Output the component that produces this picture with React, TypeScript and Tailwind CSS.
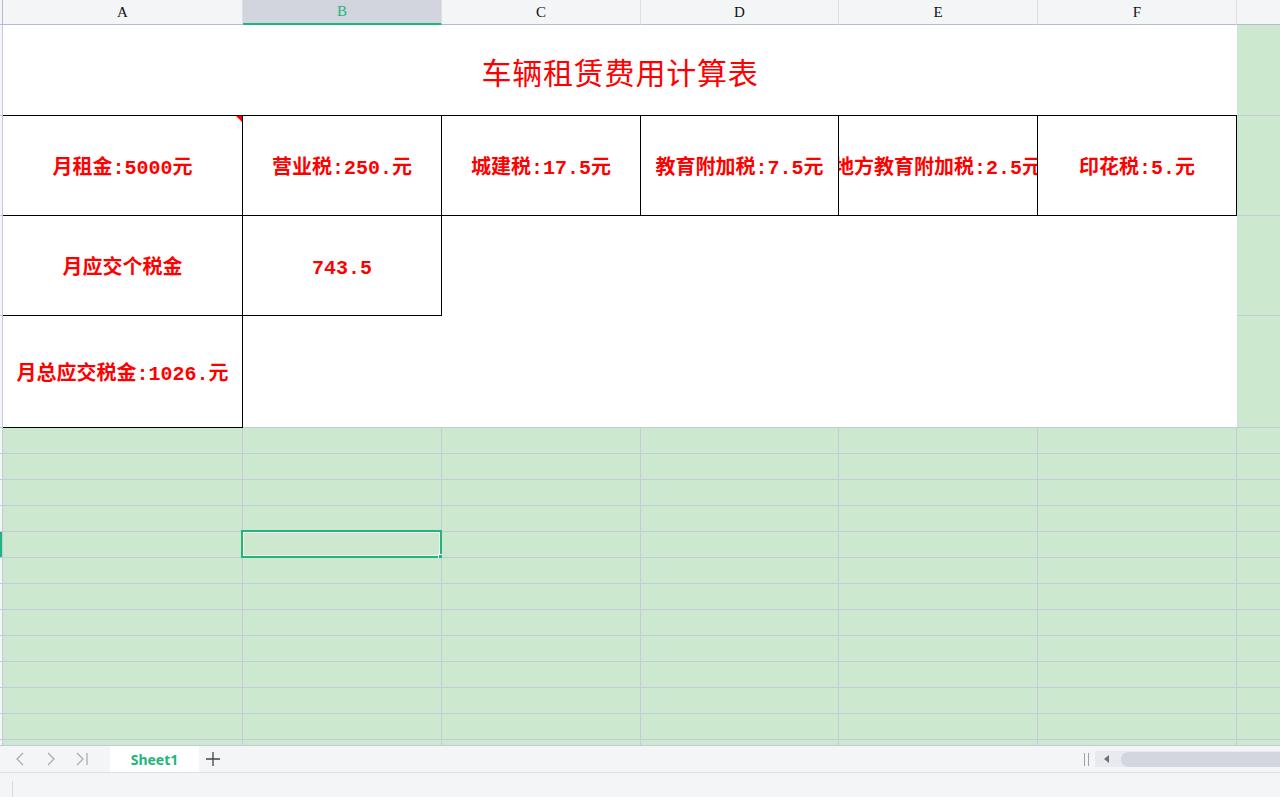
import React from "react";

const cellFont = { fontFamily: '"Liberation Mono", "Noto Sans CJK SC", monospace' };

const headers = [
    { label: "A", w: "w-[240px]" },
    { label: "B", w: "w-[199px]", active: true },
    { label: "C", w: "w-[199px]" },
    { label: "D", w: "w-[198px]" },
    { label: "E", w: "w-[199px]" },
    { label: "F", w: "w-[199px]" },
];

const row2 = ["月租金:5000元", "营业税:250.元", "城建税:17.5元", "教育附加税:7.5元", "地方教育附加税:2.5元", "印花税:5.元"];

function Strip({ active }: { active?: boolean }) {
    return (
        <div className={`border-r border-b border-[#c5cad8] ${active ? "bg-[#1fb57b]" : "bg-[#f4f5f7]"}`}></div>
    );
}

function G() {
    return <div className="bg-[#cce8cf] border-b border-[#c5cad8]"></div>;
}

function Box({ text, corner }: { text: string; corner?: boolean }) {
    return (
        <div
            className="relative bg-white border-r border-b border-black flex items-center justify-center overflow-hidden whitespace-nowrap pt-[6px] text-[20px] font-bold text-[#ff0000]"
            style={cellFont}
        >
            {text}
            {corner && (
                <svg className="absolute top-0 right-0" width="6" height="6" viewBox="0 0 6 6">
                    <polygon points="0,0 6,0 6,6" fill="#ff0000" />
                </svg>
            )}
        </div>
    );
}

export default function App() {
    // rows 5..16 plus the cut-off row 17
    const greenRows = Array.from({ length: 13 }, (_, i) => i + 5);

    return (
        <div className="w-[1280px] h-[797px] flex flex-col overflow-hidden bg-white">
            {/* column header */}
            <div className="flex h-[25px] bg-[#f4f5f7]" style={{ fontFamily: '"Liberation Serif", serif' }}>
                <div className="w-[3px] border-r border-b border-[#b4bbcc]"></div>
                {headers.map((h) => (
                    <div
                        key={h.label}
                        className={`${h.w} flex items-center justify-center text-[15px] border-r border-[#dcdfe6] ${
                            h.active
                                ? "bg-[#d2d5dd] text-[#1fb57b] border-b-2 border-b-[#1fb57b]"
                                : "text-[#111] border-b border-b-[#b4bbcc]"
                        }`}
                    >
                        {h.label}
                    </div>
                ))}
                <div className="flex-1 border-b border-[#b4bbcc]"></div>
            </div>

            {/* sheet */}
            <div className="grid grid-cols-[3px_240px_199px_199px_198px_199px_199px_1fr] grid-rows-[91px_100px_100px_112px_repeat(12,26px)_6px] h-[721px]">
                {/* row 1 */}
                <Strip />
                <div
                    className="col-span-6 bg-white border-b border-black flex items-center justify-center pt-[2px] text-[30px] text-[#ff0000] tracking-[0.8px]"
                    style={{ fontFamily: '"Noto Sans CJK SC", sans-serif' }}
                >
                    车辆租赁费用计算表
                </div>
                <G />

                {/* row 2 */}
                <Strip />
                {row2.map((t, i) => (
                    <Box key={t} text={t} corner={i === 0} />
                ))}
                <G />

                {/* row 3 */}
                <Strip />
                <Box text="月应交个税金" />
                <Box text="743.5" />
                <div className="col-span-4 bg-white"></div>
                <G />

                {/* row 4 */}
                <Strip />
                <Box text="月总应交税金:1026.元" />
                <div className="col-span-5 bg-white border-b border-[#c5cad8]"></div>
                <G />

                {greenRows.map((r) => (
                    <React.Fragment key={r}>
                        <Strip active={r === 9} />
                        {headers.map((h) => (
                            <div key={h.label} className="relative bg-[#cce8cf] border-r border-b border-[#c5cad8]">
                                {r === 9 && h.label === "B" && (
                                    <div className="absolute -top-[2px] -left-[2px] -right-[1px] -bottom-[1px] border-[2px] border-[#1fb57b]">
                                        <div className="w-full h-full border border-white"></div>
                                        <div className="absolute -right-[4px] -bottom-[4px] w-[6px] h-[6px] bg-[#1fb57b] border border-white"></div>
                                    </div>
                                )}
                            </div>
                        ))}
                        <G />
                    </React.Fragment>
                ))}
            </div>

            {/* sheet tabs */}
            <div className="flex items-stretch h-[27px] bg-[#f4f5f7] border-b border-[#dcdfe5]">
                <div className="flex items-center gap-[17px] pl-[13px] w-[110px] text-[#a4a8b0]">
                    <svg width="14" height="16" viewBox="0 0 14 16" fill="none" stroke="currentColor" strokeWidth="1.2">
                        <path d="M10 2 L4 8 L10 14" />
                    </svg>
                    <svg width="14" height="16" viewBox="0 0 14 16" fill="none" stroke="currentColor" strokeWidth="1.2">
                        <path d="M4 2 L10 8 L4 14" />
                    </svg>
                    <svg width="14" height="16" viewBox="0 0 14 16" fill="none" stroke="currentColor" strokeWidth="1.2">
                        <path d="M2 2 L8 8 L2 14 M12 2 V14" />
                    </svg>
                </div>
                <div
                    className="w-[89px] bg-white flex items-center justify-center text-[14px] font-bold text-[#1fb57b]"
                    style={{ fontFamily: '"Noto Sans", sans-serif' }}
                >
                    Sheet1
                </div>
                <div className="w-[28px] flex items-center justify-center text-[#444]">
                    <svg width="16" height="16" viewBox="0 0 16 16" fill="none" stroke="currentColor" strokeWidth="1.3">
                        <path d="M8 1 V15 M1 8 H15" />
                    </svg>
                </div>
                <div className="flex-1"></div>
                <div className="flex items-center gap-[3px] pr-[6px]">
                    <div className="w-px h-[13px] bg-[#9aa0ad]"></div>
                    <div className="w-px h-[13px] bg-[#9aa0ad]"></div>
                </div>
                <div className="w-[185px] my-[5px] bg-[#e8eaef] flex items-center pl-[9px] gap-[12px]">
                    <svg width="5" height="8" viewBox="0 0 5 8">
                        <polygon points="5,0 0,4 5,8" fill="#6b7080" />
                    </svg>
                    <div className="flex-1 h-[15px] rounded-l-full bg-[#d3d6de]"></div>
                </div>
            </div>

            {/* status bar */}
            <div className="flex-1 bg-[#f4f5f7] flex items-end pl-[12px]">
                <div className="w-px h-[16px] bg-[#d8dbe0]"></div>
            </div>
        </div>
    );
}
